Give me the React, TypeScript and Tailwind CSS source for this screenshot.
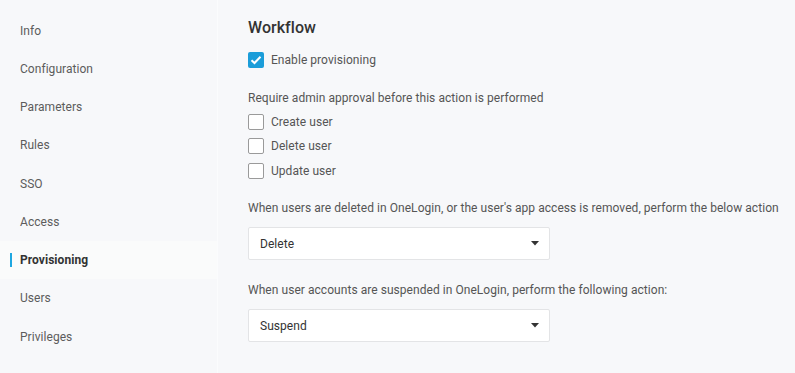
import { useState } from "react";

const menus = [
  "Info",
  "Configuration",
  "Parameters",
  "Rules",
  "SSO",
  "Access",
  "Provisioning",
  "Users",
  "Privileges",
];

const Check = ({ checked, label }: { checked?: boolean; label: string }) => (
  <label className="flex items-center gap-[7px] h-[24.5px]">
    {checked ? (
      <span className="w-4 h-4 rounded-[2px] bg-[#1b9dd9] flex items-center justify-center">
        <svg width="12" height="10" viewBox="0 0 12 10" fill="none">
          <path d="M1.5 5.2 L4.5 8 L10.5 1.8" stroke="#fff" strokeWidth="2" />
        </svg>
      </span>
    ) : (
      <span className="w-4 h-4 rounded-[2px] border border-[#9a9a9a] bg-white" />
    )}
    <span className="text-[12px] tracking-[0.05px] text-[#555]">{label}</span>
  </label>
);

const Select = ({ value }: { value: string }) => (
  <div className="w-[302px] h-[33px] bg-white border border-[#e3e4e6] rounded-[2px] flex items-center justify-between pl-[11px] pr-[10px]">
    <span className="text-[12px] tracking-[0.05px] text-[#333]">{value}</span>
    <svg width="8" height="5" viewBox="0 0 8 5">
      <path d="M0 0 H8 L4 4.5 Z" fill="#333" />
    </svg>
  </div>
);

const App = () => {
  const [active] = useState("Provisioning");
  return (
    <div
      className="flex w-[795px] h-[373px] bg-[#f7f8fa] overflow-hidden"
      style={{ fontFamily: "Roboto, sans-serif" }}
    >
      <aside className="w-[218px] shrink-0 pt-[11.5px] border-r border-[#fbfcfd]">
        <ul>
          {menus.map((m) => (
            <li
              key={m}
              className={`relative h-[38.25px] flex items-center pl-5 text-[12px] tracking-[0.05px] ${
                m === active ? "bg-[#fafbfb] font-bold text-[#333]" : "text-[#5c5c5c]"
              }`}
            >
              {m === active && (
                <span className="absolute left-[10px] top-[12px] w-[2px] h-[14px] bg-[#1ea7e1]" />
              )}
              {m}
            </li>
          ))}
        </ul>
      </aside>

      <main className="flex-1 pl-[30px] pt-[17px] tracking-[0.05px]">
        <h2 className="text-[16px] font-medium text-[#333] leading-[22px]">Workflow</h2>
        <div className="mt-[9px]">
          <Check checked label="Enable provisioning" />
        </div>
        <p className="mt-[17px] text-[12px] text-[#555] leading-[16px]">
          Require admin approval before this action is performed
        </p>
        <div className="mt-[4px] flex flex-col">
          <Check label="Create user" />
          <Check label="Delete user" />
          <Check label="Update user" />
        </div>
        <p className="mt-[17px] text-[12px] text-[#555] leading-[16px]">
          When users are deleted in OneLogin, or the user's app access is removed, perform the below action
        </p>
        <div className="mt-[11px]">
          <Select value="Delete" />
        </div>
        <p className="mt-[22px] text-[12px] text-[#555] leading-[16px]">
          When user accounts are suspended in OneLogin, perform the following action:
        </p>
        <div className="mt-[11px]">
          <Select value="Suspend" />
        </div>
      </main>
    </div>
  );
};

export default App;
